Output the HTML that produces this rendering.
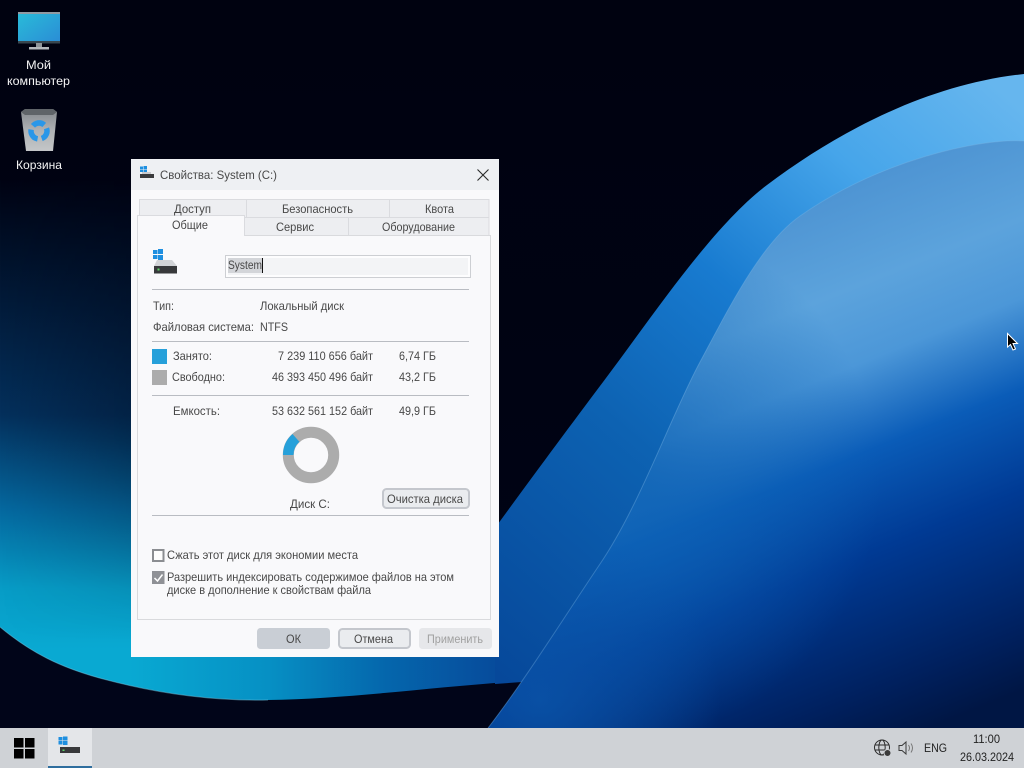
<!DOCTYPE html>
<html><head><meta charset="utf-8"><style>
html,body{margin:0;padding:0;width:1024px;height:768px;overflow:hidden;background:#000}
svg{display:block}
text{font-family:"Liberation Sans","Noto Sans CJK SC",sans-serif;font-size:12px;fill:#484848}
.w{fill:#f4f4f4}
</style></head><body>
<svg width="1024" height="768" viewBox="0 0 1024 768" xmlns="http://www.w3.org/2000/svg">
<defs>
<linearGradient id="bg" x1="0" y1="0" x2="0" y2="1"><stop offset="0" stop-color="#000210"/><stop offset="1" stop-color="#000416"/></linearGradient>
<linearGradient id="left" gradientUnits="userSpaceOnUse" x1="0" y1="180" x2="0" y2="650">
<stop offset="0" stop-color="#000313"/><stop offset=".5" stop-color="#04305c"/><stop offset=".7" stop-color="#05689f"/><stop offset=".87" stop-color="#079cc6"/><stop offset="1" stop-color="#09a9d2"/></linearGradient>
<linearGradient id="lefth" gradientUnits="userSpaceOnUse" x1="0" y1="0" x2="135" y2="0"><stop offset="0" stop-color="#000210" stop-opacity="0"/><stop offset="1" stop-color="#000210" stop-opacity=".3"/></linearGradient>
<linearGradient id="fade" gradientUnits="userSpaceOnUse" x1="0" y1="440" x2="0" y2="640"><stop offset="0" stop-color="#fff"/><stop offset="1" stop-color="#000"/></linearGradient>
<mask id="leftmask" maskUnits="userSpaceOnUse" x="0" y="180" width="135" height="545"><rect x="0" y="180" width="135" height="545" fill="url(#fade)"/></mask>
<linearGradient id="under" gradientUnits="userSpaceOnUse" x1="130" y1="0" x2="525" y2="0"><stop offset="0" stop-color="#09a9d2"/><stop offset=".35" stop-color="#0690c4"/><stop offset=".65" stop-color="#0566ac"/><stop offset=".92" stop-color="#064c9c"/><stop offset="1" stop-color="#064a9a"/></linearGradient>
<linearGradient id="band" gradientUnits="userSpaceOnUse" x1="1000" y1="90" x2="500" y2="680">
<stop offset="0" stop-color="#66b6ee"/><stop offset=".2" stop-color="#46a5ea"/><stop offset=".42" stop-color="#187bd0"/><stop offset=".65" stop-color="#0d62b2"/><stop offset="1" stop-color="#06489a"/></linearGradient>
<linearGradient id="inner" gradientUnits="userSpaceOnUse" x1="790" y1="180" x2="1000" y2="700">
<stop offset="0" stop-color="#4a90d0"/><stop offset=".22" stop-color="#5ca3dc"/><stop offset=".35" stop-color="#4c97d8"/><stop offset=".5" stop-color="#0a5cb8"/><stop offset=".67" stop-color="#003a94"/><stop offset=".9" stop-color="#00205e"/><stop offset="1" stop-color="#001644"/></linearGradient>
<radialGradient id="lift" gradientUnits="userSpaceOnUse" cx="620" cy="480" r="260"><stop offset="0" stop-color="#0d62b4" stop-opacity=".9"/><stop offset="1" stop-color="#0d62b4" stop-opacity="0"/></radialGradient>
<radialGradient id="lift2" gradientUnits="userSpaceOnUse" cx="540" cy="700" r="180"><stop offset="0" stop-color="#0a52a6" stop-opacity=".9"/><stop offset="1" stop-color="#0a52a6" stop-opacity="0"/></radialGradient>
<linearGradient id="screen" x1="0" y1="0" x2="1" y2="1"><stop offset="0" stop-color="#29bcd8"/><stop offset="1" stop-color="#2a8cd6"/></linearGradient>
<linearGradient id="bin" x1="0" y1="0" x2="0" y2="1"><stop offset="0" stop-color="#83878b"/><stop offset=".5" stop-color="#aeb1b4"/><stop offset="1" stop-color="#c4c6c8"/></linearGradient>
<clipPath id="innerclip"><path d="M1024,141 C980,138 880,160 800,216 C760,244 728,310 700,362 C670,418 640,505 600,564 C565,616 525,680 488,728 L1024,728 Z"/></clipPath>
</defs>

<!-- wallpaper -->
<rect width="1024" height="768" fill="url(#bg)"/>
<rect x="0" y="180" width="135" height="545" fill="url(#left)"/>
<rect x="0" y="180" width="135" height="545" fill="url(#lefth)" mask="url(#leftmask)"/>
<rect x="130" y="640" width="400" height="85" fill="url(#under)"/>
<path d="M0,627 C30,652 60,668 107,680 C160,694 215,701 268,700 C350,699 440,686 525,681 L525,728 L0,728 Z" fill="#010519"/>
<path d="M0,627 C30,652 60,668 107,680 C160,694 215,701 268,700" fill="none" stroke="#7ccbe4" stroke-opacity=".45" stroke-width="1"/>
<path d="M1024,74 C930,84 840,130 767,185 C712,226 650,320 600,386 C570,426 530,480 495,528 L495,684 L522,682 L488,728 L1024,728 Z" fill="url(#band)"/>
<g clip-path="url(#innerclip)">
<rect x="480" y="130" width="544" height="600" fill="url(#inner)"/>
<rect x="480" y="200" width="420" height="530" fill="url(#lift)"/>
<rect x="480" y="500" width="260" height="230" fill="url(#lift2)"/>
</g>
<path d="M1024,141 C980,138 880,160 800,216 C760,244 728,310 700,362 C670,418 640,505 600,564 C565,616 525,680 488,728" fill="none" stroke="#7fb6e6" stroke-opacity=".35" stroke-width="1"/>

<!-- desktop icons -->
<path d="M18,12 H60 V43 H18 Z" fill="url(#screen)"/>
<path d="M18,12 H60 V14 H18 Z" fill="#8f9aa3"/>
<path d="M18,41 H60 V43.500 H18 Z" fill="#39474f"/>
<rect x="36" y="43" width="6" height="5" fill="#8e9499"/>
<rect x="29" y="47" width="20" height="2.500" fill="#b4b8bc"/>
<text class="w" x="26" y="69" textLength="25" lengthAdjust="spacingAndGlyphs">Мой</text>
<text class="w" x="7" y="85" textLength="63" lengthAdjust="spacingAndGlyphs">компьютер</text>
<path d="M21,112 L25,109 H53 L57,112 L53,151 H26 Z" fill="url(#bin)"/>
<path d="M21,112 L25,109 H53 L57,112 L53,115 H25 Z" fill="#5f6468"/>
<circle cx="39" cy="131" r="8" fill="none" stroke="#2a97e8" stroke-width="5.500" stroke-dasharray="12.500 4.200" transform="rotate(-20 39 131)"/>
<text class="w" x="16" y="169" textLength="46" lengthAdjust="spacingAndGlyphs">Корзина</text>

<!-- dialog -->
<rect x="131" y="159" width="368" height="498" fill="#f9f9fb"/>
<rect x="131" y="159" width="368" height="31" fill="#eef0f3"/>
<g fill="#1e8fe0"><rect x="140" y="166.500" width="3" height="2.500"/><rect x="143.500" y="166" width="3.500" height="3"/><rect x="140" y="169.500" width="3" height="2.500"/><rect x="143.500" y="169.500" width="3.500" height="3"/></g>
<rect x="140" y="174" width="14" height="4" fill="#3a3b3d"/><rect x="142" y="172" width="9" height="2" fill="#c9cbce"/>
<text x="160" y="179" textLength="117" lengthAdjust="spacingAndGlyphs">Свойства: System (C:)</text>
<path d="M477.500,169.500 L488.500,180.500 M488.500,169.500 L477.500,180.500" stroke="#2a2a2a" stroke-width="1.100" fill="none"/>

<!-- tabs -->
<rect x="139.500" y="199.500" width="349.500" height="36" fill="#edeef1" stroke="#dadbdf"/>
<path d="M139,217.500 H489 M246.500,199 V217 M389.500,199 V217 M348.500,217 V235" stroke="#dadbdf" fill="none"/>
<rect x="137.500" y="235.500" width="353" height="384" fill="#f9f9fb" stroke="#d9dadd"/>
<path d="M137.500,236 V215.500 H244.500 V236" fill="#f9f9fb" stroke="#dadbdf"/>
<rect x="138" y="234" width="106" height="3" fill="#f9f9fb"/>
<text x="174" y="213" textLength="37" lengthAdjust="spacingAndGlyphs">Доступ</text>
<text x="282" y="213" textLength="71" lengthAdjust="spacingAndGlyphs">Безопасность</text>
<text x="425" y="213" textLength="29" lengthAdjust="spacingAndGlyphs">Квота</text>
<text x="172" y="229" textLength="36" lengthAdjust="spacingAndGlyphs">Общие</text>
<text x="276" y="231" textLength="38" lengthAdjust="spacingAndGlyphs">Сервис</text>
<text x="382" y="231" textLength="73" lengthAdjust="spacingAndGlyphs">Оборудование</text>

<!-- drive icon -->
<g fill="#1e8fe0"><rect x="153" y="250" width="4.500" height="4"/><rect x="158" y="249" width="5" height="5"/><rect x="153" y="255" width="4.500" height="4"/><rect x="158" y="255" width="5" height="5"/></g>
<path d="M157,260 H172 L177,266 H154 Z" fill="#d2d4d7"/>
<rect x="154" y="266" width="23" height="7.500" fill="#38393b"/>
<rect x="157.500" y="268.500" width="2" height="2" fill="#5fd36a"/>

<!-- name field -->
<rect x="225.500" y="255.500" width="245" height="22" fill="#fdfdfe" stroke="#cdcfd3"/>
<rect x="228" y="258" width="240" height="17" fill="#f3f4f6"/>
<rect x="228" y="258" width="34" height="15" fill="#d3d5d9"/>
<text x="228" y="269" textLength="34" lengthAdjust="spacingAndGlyphs">System</text>
<rect x="262" y="258" width="1" height="15" fill="#111"/>

<path d="M152,289.500 H469 M152,341.500 H469 M152,395.500 H469 M152,515.500 H469" stroke="#b9bcc2" fill="none"/>

<text x="153" y="310" textLength="21" lengthAdjust="spacingAndGlyphs">Тип:</text>
<text x="260" y="310" textLength="84" lengthAdjust="spacingAndGlyphs">Локальный диск</text>
<text x="153" y="331" textLength="101" lengthAdjust="spacingAndGlyphs">Файловая система:</text>
<text x="260" y="331" textLength="28" lengthAdjust="spacingAndGlyphs">NTFS</text>

<rect x="152" y="349" width="15" height="15" fill="#26a0da"/>
<rect x="152" y="370" width="15" height="15" fill="#acacac"/>
<text x="173" y="360" textLength="39" lengthAdjust="spacingAndGlyphs">Занято:</text>
<text x="278" y="360" textLength="95" lengthAdjust="spacingAndGlyphs">7 239 110 656 байт</text>
<text x="399" y="360" textLength="37" lengthAdjust="spacingAndGlyphs">6,74 ГБ</text>
<text x="172" y="381" textLength="53" lengthAdjust="spacingAndGlyphs">Свободно:</text>
<text x="272" y="381" textLength="101" lengthAdjust="spacingAndGlyphs">46 393 450 496 байт</text>
<text x="399" y="381" textLength="37" lengthAdjust="spacingAndGlyphs">43,2 ГБ</text>
<text x="173" y="415" textLength="47" lengthAdjust="spacingAndGlyphs">Емкость:</text>
<text x="272" y="415" textLength="101" lengthAdjust="spacingAndGlyphs">53 632 561 152 байт</text>
<text x="399" y="415" textLength="37" lengthAdjust="spacingAndGlyphs">49,9 ГБ</text>

<!-- donut -->
<circle cx="311" cy="455" r="22.700" fill="none" stroke="#acacac" stroke-width="11"/>
<path d="M283,455 A28,28 0 0 1 292.500,434 L299.400,441.800 A17.500,17.500 0 0 0 293.500,455 Z" fill="#26a0da"/>
<text x="290" y="508" textLength="40" lengthAdjust="spacingAndGlyphs">Диск C:</text>

<rect x="383" y="489" width="86" height="19" rx="3.500" fill="#eaecef" stroke="#c4c7cd" stroke-width="2"/>
<text x="387" y="503" textLength="76" lengthAdjust="spacingAndGlyphs">Очистка диска</text>

<!-- checks -->
<rect x="153" y="550" width="10.500" height="11" fill="#fdfdfd" stroke="#8b8d91" stroke-width="2"/>
<text x="167" y="559" textLength="191" lengthAdjust="spacingAndGlyphs">Сжать этот диск для экономии места</text>
<rect x="152" y="571" width="12.500" height="13" fill="#8f9196"/>
<path d="M154.500,578 L157.500,581 L162.500,574.500" fill="none" stroke="#fff" stroke-width="1.500"/>
<text x="167" y="581" textLength="287" lengthAdjust="spacingAndGlyphs">Разрешить индексировать содержимое файлов на этом</text>
<text x="167" y="594" textLength="204" lengthAdjust="spacingAndGlyphs">диске в дополнение к свойствам файла</text>

<!-- buttons -->
<rect x="257" y="628" width="73" height="21" rx="3.500" fill="#c9ced5"/>
<text x="286" y="643" textLength="15" lengthAdjust="spacingAndGlyphs">ОК</text>
<rect x="339" y="629" width="71" height="19" rx="3.500" fill="#eaecef" stroke="#c4c7cd" stroke-width="2"/>
<text x="354" y="643" textLength="39" lengthAdjust="spacingAndGlyphs">Отмена</text>
<rect x="419" y="628" width="73" height="21" rx="3.500" fill="#e6e7ea"/>
<text x="427" y="643" textLength="56" lengthAdjust="spacingAndGlyphs" style="fill:#a0a0a0">Применить</text>

<!-- taskbar -->
<rect x="0" y="728" width="1024" height="40" fill="#cfd2d6"/>
<rect x="48" y="728" width="44" height="40" fill="#e4e6e9"/>
<rect x="48" y="766" width="44" height="2" fill="#2f6e9e"/>
<g fill="#000"><rect x="14" y="738" width="9.500" height="9.500"/><rect x="25" y="738" width="9.500" height="9.500"/><rect x="14" y="749" width="9.500" height="9.500"/><rect x="25" y="749" width="9.500" height="9.500"/></g>
<g fill="#1e8fe0"><rect x="58.500" y="737" width="4" height="3.500"/><rect x="63" y="736.500" width="4.500" height="4"/><rect x="58.500" y="741" width="4" height="3.500"/><rect x="63" y="741" width="4.500" height="4"/></g>
<rect x="60" y="747" width="20" height="6" fill="#38393b"/><rect x="62.500" y="749.500" width="2" height="1.500" fill="#5fd36a"/>

<!-- tray -->
<g fill="none" stroke="#2c2c2c" stroke-width="1">
<circle cx="882" cy="747.500" r="7.500"/><ellipse cx="882" cy="747.500" rx="3.200" ry="7.500"/><path d="M875,745 H889 M875,750 H889"/>
</g>
<circle cx="887.500" cy="753" r="3.500" fill="#3a3a3a" stroke="#cfd2d6"/>
<path d="M899,745.500 H902 L906,742 V754 L902,750.500 H899 Z" fill="none" stroke="#3a3a3a"/>
<path d="M908.500,745 Q910.500,748 908.500,751 M911,743.500 Q914,748 911,752.500" fill="none" stroke="#777"/>
<text x="924" y="752" textLength="23" lengthAdjust="spacingAndGlyphs" style="fill:#222">ENG</text>
<text x="973" y="743" textLength="27" lengthAdjust="spacingAndGlyphs" style="fill:#222">11:00</text>
<text x="960" y="761" textLength="54" lengthAdjust="spacingAndGlyphs" style="fill:#222">26.03.2024</text>

<!-- cursor -->
<path d="M1007.500,333.500 V347 L1010.500,344.500 L1013,350 L1015.500,349 L1013,343.500 L1017.500,343.500 Z" fill="#000" stroke="#fff" stroke-width="1"/>
</svg>
</body></html>
